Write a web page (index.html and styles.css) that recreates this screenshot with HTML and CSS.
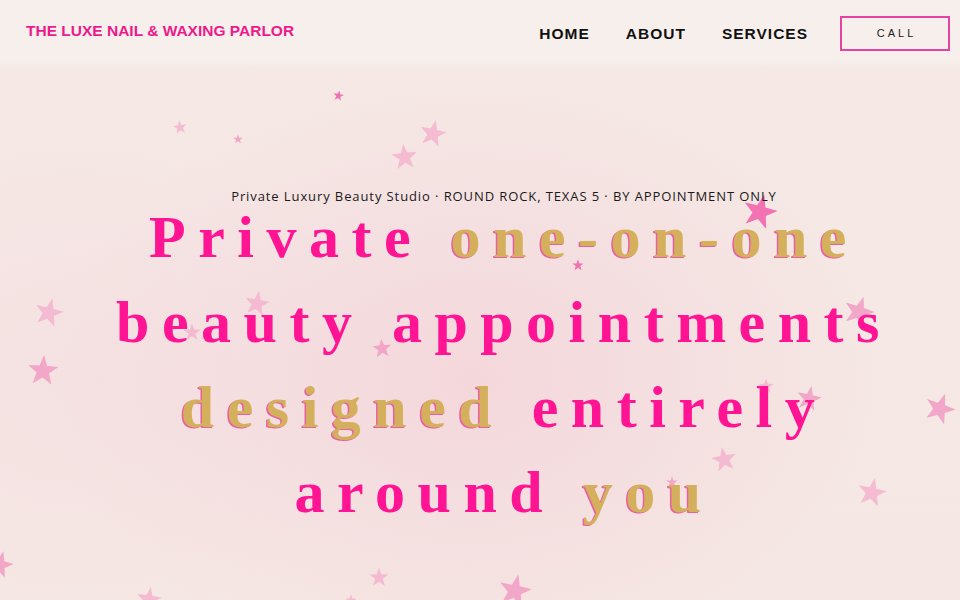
FILE: index.html
```html
<!DOCTYPE html>
<html lang="en">
<head>
<meta charset="utf-8">
<title>The Luxe Nail &amp; Waxing Parlor</title>
<link rel="stylesheet" href="styles.css">
</head>
<body>
<div class="page">
  <svg class="defs" width="0" height="0" aria-hidden="true">
    <defs>
      <symbol id="star" viewBox="0 0 100 100">
        <polygon points="50,3 61.8,36.5 97.5,37.5 69.2,59.3 79.4,93.5 50,73.3 20.6,93.5 30.8,59.3 2.5,37.5 38.2,36.5"/>
      </symbol>
    </defs>
  </svg>

  <header class="topbar">
    <a class="logo" href="#">THE LUXE NAIL &amp; WAXING PARLOR</a>
    <nav class="nav">
      <a href="#">HOME</a>
      <a href="#">ABOUT</a>
      <a href="#">SERVICES</a>
      <a class="call" href="#">CALL</a>
    </nav>
  </header>

  <section class="hero">
    <div class="stars" aria-hidden="true">
      <svg class="star s-dark" style="left:333px;top:90px;width:11px;height:11px;transform:rotate(10deg)"><use href="#star"/></svg>
      <svg class="star s-light" style="left:173px;top:120px;width:14px;height:14px;transform:rotate(-8deg)"><use href="#star"/></svg>
      <svg class="star s-mid" style="left:233px;top:134px;width:10px;height:10px"><use href="#star"/></svg>
      <svg class="star s-light" style="left:419px;top:119px;width:28px;height:28px;transform:rotate(12deg)"><use href="#star"/></svg>
      <svg class="star s-light" style="left:391px;top:143px;width:27px;height:27px;transform:rotate(-6deg)"><use href="#star"/></svg>
      <svg class="star s-dark" style="left:742px;top:193px;width:36px;height:36px;transform:rotate(15deg)"><use href="#star"/></svg>
      <svg class="star s-dark" style="left:572px;top:259px;width:12px;height:12px"><use href="#star"/></svg>
      <svg class="star s-light" style="left:34px;top:297px;width:30px;height:30px;transform:rotate(14deg)"><use href="#star"/></svg>
      <svg class="star s-mid" style="left:27px;top:354px;width:32px;height:32px;transform:rotate(4deg)"><use href="#star"/></svg>
      <svg class="star s-light" style="left:244px;top:290px;width:26px;height:26px;transform:rotate(10deg)"><use href="#star"/></svg>
      <svg class="star s-light" style="left:183px;top:323px;width:18px;height:18px"><use href="#star"/></svg>
      <svg class="star s-mid" style="left:372px;top:338px;width:20px;height:20px;transform:rotate(-5deg)"><use href="#star"/></svg>
      <svg class="star s-mid" style="left:843px;top:295px;width:32px;height:32px;transform:rotate(18deg)"><use href="#star"/></svg>
      <svg class="star s-mid" style="left:924px;top:392px;width:32px;height:32px;transform:rotate(20deg)"><use href="#star"/></svg>
      <svg class="star s-mid" style="left:796px;top:385px;width:26px;height:26px;transform:rotate(12deg)"><use href="#star"/></svg>
      <svg class="star s-light" style="left:758px;top:378px;width:16px;height:16px"><use href="#star"/></svg>
      <svg class="star s-light" style="left:711px;top:446px;width:26px;height:26px;transform:rotate(-10deg)"><use href="#star"/></svg>
      <svg class="star s-light" style="left:857px;top:477px;width:30px;height:30px;transform:rotate(12deg)"><use href="#star"/></svg>
      <svg class="star s-mid" style="left:666px;top:476px;width:12px;height:12px"><use href="#star"/></svg>
      <svg class="star s-mid" style="left:-14px;top:550px;width:28px;height:28px;transform:rotate(15deg)"><use href="#star"/></svg>
      <svg class="star s-light" style="left:369px;top:567px;width:20px;height:20px"><use href="#star"/></svg>
      <svg class="star s-mid" style="left:498px;top:573px;width:34px;height:34px;transform:rotate(12deg)"><use href="#star"/></svg>
      <svg class="star s-light" style="left:136px;top:586px;width:26px;height:26px;transform:rotate(8deg)"><use href="#star"/></svg>
      <svg class="star s-light" style="left:345px;top:594px;width:12px;height:12px"><use href="#star"/></svg>
    </div>

    <div class="hero-inner">
      <p class="eyebrow">Private Luxury Beauty Studio · ROUND ROCK, TEXAS 5 · BY APPOINTMENT ONLY</p>
      <h1 class="headline">
        <span class="line"><span class="pink">Private</span> <span class="gold">one-on-one</span></span>
        <span class="line"><span class="pink">beauty appointments</span></span>
        <span class="line"><span class="gold">designed</span> <span class="pink">entirely</span></span>
        <span class="line"><span class="pink">around</span> <span class="gold">you</span></span>
      </h1>
    </div>
  </section>
</div>
</body>
</html>
```

FILE: styles.css
```css
* { box-sizing: border-box; }

html, body {
  margin: 0;
  padding: 0;
}

body {
  width: 960px;
  height: 600px;
  overflow: hidden;
  background: #f6eeea;
  font-family: "Liberation Sans", Arial, sans-serif;
}

.page {
  position: relative;
  width: 960px;
  height: 600px;
  overflow: hidden;
  background:
    radial-gradient(ellipse 420px 300px at 470px 380px, rgba(244, 212, 218, 0.85), rgba(244, 214, 220, 0) 100%),
    radial-gradient(ellipse 300px 260px at 80px 380px, rgba(245, 220, 224, 0.6), rgba(245, 220, 224, 0) 100%),
    linear-gradient(180deg, #f6efeb 0px, #f6efeb 60px, #f5e8e5 70px, #f5e8e4 100%);
}

.defs {
  position: absolute;
  width: 0;
  height: 0;
}

.topbar {
  position: relative;
  z-index: 2;
  height: 64px;
  display: flex;
  align-items: center;
  justify-content: space-between;
  padding: 0 10px 0 26px;
}

.logo {
  color: #ec1a8c;
  text-decoration: none;
  font-family: "Liberation Sans", Arial, sans-serif;
  font-weight: 700;
  font-size: 15.5px;
  letter-spacing: 0;
  margin-top: -2px;
}

.nav {
  display: flex;
  align-items: center;
}

.nav a {
  color: #111;
  text-decoration: none;
  font-weight: 700;
  font-size: 15.5px;
  letter-spacing: 1px;
  margin-left: 36px;
  margin-top: 4px;
}

.nav a:first-child { margin-left: 0; }

.nav a.call {
  margin-left: 32px;
  margin-top: 2px;
  width: 110px;
  height: 35px;
  border: 2px solid #e4449f;
  display: flex;
  align-items: center;
  justify-content: center;
  font-size: 11px;
  font-weight: 400;
  letter-spacing: 3px;
  color: #222;
  padding-left: 3px;
}

.hero {
  position: relative;
  height: 536px;
}

.stars {
  position: absolute;
  left: 0;
  top: -64px;
  width: 960px;
  height: 600px;
  z-index: 1;
  pointer-events: none;
}

.star {
  position: absolute;
  overflow: visible;
}

.s-light { fill: #f4b4cf; opacity: 0.85; }
.s-mid { fill: #f29cc4; opacity: 0.85; }
.s-dark { fill: #f266ad; opacity: 0.9; }

.hero-inner {
  position: relative;
  z-index: 2;
  padding-left: 48px;
  text-align: center;
}

.eyebrow {
  margin: 0;
  padding-top: 124px;
  font-family: "Open Sans", "DejaVu Sans", sans-serif;
  font-size: 13px;
  letter-spacing: 0.9px;
  color: #1a1a1a;
  line-height: 16px;
}

.headline {
  margin: 0;
  font-family: "Liberation Serif", "Times New Roman", serif;
  font-weight: 700;
  font-size: 60px;
  letter-spacing: 12.5px;
  white-space: nowrap;
}

.line {
  display: block;
  line-height: 66px;
  margin-bottom: 19px;
}

.pink { color: #ff1493; }

.gold {
  color: #d4b05c;
  text-shadow: -1.5px 0.5px 0 #ea5fa3;
}
```
